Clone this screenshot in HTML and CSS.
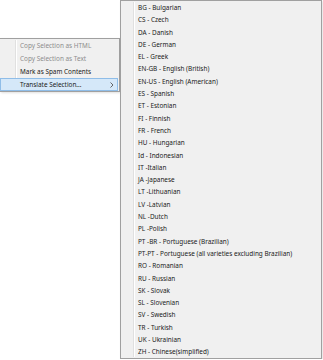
FILE: index.html
```html
<!DOCTYPE html>
<html lang="en">

<head>
  <meta charset="UTF-8" />
  <title>Translate Selection</title>
  <link rel="stylesheet" href="styles.css">
</head>

<body>
  <div class="screen">
    <div class="menu main">
      <div class="item disabled">Copy Selection as HTML</div>
      <div class="item disabled">Copy Selection as Text</div>
      <div class="item">Mark as Spam Contents</div>
      <div class="item active">
        <span>Translate Selection...</span>
        <svg class="arrow" width="4" height="6" viewBox="0 0 4 6">
          <path d="M0.5 0.5 L3 3 L0.5 5.5" fill="none" stroke="#555" stroke-width="0.9" />
        </svg>
      </div>
    </div>

    <div class="menu sub">
      <div class="item">BG - Bulgarian</div>
      <div class="item">CS - Czech</div>
      <div class="item">DA - Danish</div>
      <div class="item">DE - German</div>
      <div class="item">EL - Greek</div>
      <div class="item">EN-GB - English (British)</div>
      <div class="item">EN-US - English (American)</div>
      <div class="item">ES - Spanish</div>
      <div class="item">ET - Estonian</div>
      <div class="item">FI - Finnish</div>
      <div class="item">FR - French</div>
      <div class="item">HU - Hungarian</div>
      <div class="item">Id - Indonesian</div>
      <div class="item">IT -Italian</div>
      <div class="item">JA -Japanese</div>
      <div class="item">LT -Lithuanian</div>
      <div class="item">LV -Latvian</div>
      <div class="item">NL -Dutch</div>
      <div class="item">PL -Polish</div>
      <div class="item">PT -BR - Portuguese (Brazilian)</div>
      <div class="item">PT-PT - Portuguese (all varieties excluding Brazilian)</div>
      <div class="item">RO - Romanian</div>
      <div class="item">RU - Russian</div>
      <div class="item">SK - Slovak</div>
      <div class="item">SL - Slovenian</div>
      <div class="item">SV - Swedish</div>
      <div class="item">TR - Turkish</div>
      <div class="item">UK - Ukrainian</div>
      <div class="item">ZH - Chinese(simplified)</div>
    </div>
  </div>
</body>

</html>
```

FILE: styles.css
```css
body {
  margin: 0;
  background-color: white;
  font-family: "Noto Sans", "Open Sans", sans-serif;
  font-size: 6.4px;
  color: #202020;
}

.screen {
  display: flex;
  align-items: flex-start;
}

.menu {
  box-sizing: border-box;
  background-color: #f0f0f0;
  border: 1px solid #a0a0a0;
  position: relative;
}

/* gutter line on the left of every menu */
.menu::before {
  content: "";
  position: absolute;
  top: 1px;
  bottom: 1px;
  border-left: 1px solid #e0e0e0;
  border-right: 1px solid #ffffff;
}

.main {
  width: 120px;
  margin-top: 38px;
  border-left: none;
  box-shadow: 1px 1px 2px rgba(0, 0, 0, 0.12);
}

.main::before {
  left: 15px;
}

.main .item {
  height: 13px;
  line-height: 13px;
  padding-left: 20px;
  position: relative;
  z-index: 1;
}

.main .disabled {
  color: #8d8d8d;
}

.main .active {
  display: flex;
  align-items: center;
  justify-content: space-between;
  box-sizing: border-box;
  margin: 0 1px 0 0;
  padding-right: 3px;
  background-color: #d5e8f9;
  border: 1px solid #8fbde8;
  padding-left: 19px;
  line-height: 11px;
}

.sub {
  width: 202px;
  height: 359px;
  padding: 1px 0;
  box-shadow: 1px 1px 2px rgba(0, 0, 0, 0.12);
}

.sub::before {
  left: 12px;
}

.sub .item {
  height: 12.3px;
  line-height: 12.3px;
  padding-left: 17px;
  white-space: nowrap;
}
```
